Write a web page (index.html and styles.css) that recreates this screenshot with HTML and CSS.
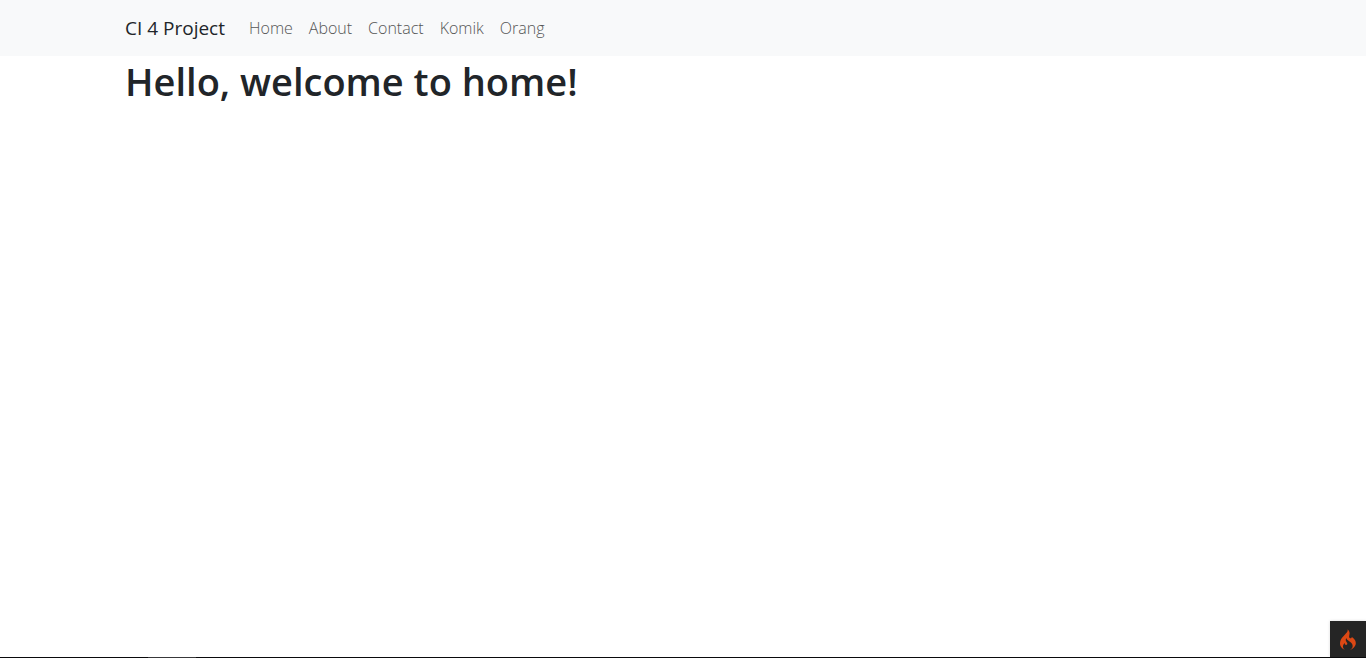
FILE: index.html
```
<!DOCTYPE html>
<html lang="en">
<head>
<meta charset="utf-8">
<meta name="viewport" content="width=device-width, initial-scale=1">
<title>Home</title>
<link rel="stylesheet" href="styles.css">
</head>
<body>
<nav class="navbar">
  <div class="container navbar-inner">
    <a class="brand" href="#">CI 4 Project</a>
    <div class="nav-links">
      <a class="nav-link" href="#">Home</a>
      <a class="nav-link" href="#">About</a>
      <a class="nav-link" href="#">Contact</a>
      <a class="nav-link" href="#">Komik</a>
      <a class="nav-link" href="#">Orang</a>
    </div>
  </div>
</nav>
<main class="container">
  <h1 class="title">Hello, welcome to home!</h1>
</main>
<button class="debug-button" type="button" aria-label="Debug toolbar">
  <svg class="flame" viewBox="0 0 155 200" aria-hidden="true"><path fill="#dd4814" d="M73.7 3.7c2.2 7.9-.7 18.5-7.8 29-1.8 2.6-10.7 12.2-19.7 21.3-23.9 24-33.6 37.1-40.3 54.4-7.9 20.6-7.8 40.8.5 58.2C12.8 180 27.6 193 42.5 198l6 2-3-2.2c-21-15.2-22.9-38.7-4.8-58.8 2.5-2.7 4.8-5 5.1-5 .4 0 .7 2.7.7 6.1 0 5.7.2 6.2 3.7 9.5 3 2.7 4.6 3.4 7.8 3.4 5.6 0 9.9-2.4 11.6-6.5 2.9-6.9 1.6-12-5-20.5-10.5-13.4-11.7-23.3-4.3-34.7l3.1-4.8.7 4.7c1.3 8.2 5.8 12.9 25 25.8 20.9 14.1 30.6 26.1 32.8 40.5 1.1 7.2-.1 16.1-3.1 21.8-2.7 5.3-11.2 14.3-16.5 17.4-2.4 1.4-4.3 2.6-4.3 2.8 0 .2 2.4-.4 5.3-1.4 24.1-8.3 42.7-27.1 48.2-48.6 1.9-7.6 1.9-20.2-.1-28.5-3.5-15.2-14.6-30.5-29.9-41.2l-7-4.9-.6 3.3c-.8 4.8-2.6 7.6-5.9 9.3-4.5 2.3-10.3 1.9-13.8-1-6.7-5.7-7.8-14.6-3.7-30.5 3-11.6 3.2-20.6.5-29.1C88.3 18 80.6 6.3 74.8 2.2 73.1.9 73 1 73.7 3.7z"/></svg>
</button>
<div class="bottom-edge"><div class="bottom-mark"></div></div>
</body>
</html>
```
FILE: styles.css
```
* { box-sizing: border-box; }
body {
  margin: 0;
  background: #fff;
  color: #212529;
  font-family: "Segoe UI", "Open Sans", "Noto Sans", sans-serif;
  font-size: 16px;
  line-height: 24px;
}
.container {
  width: 100%;
  max-width: 1140px;
  margin: 0 auto;
  padding: 0 12px;
}
.navbar { background: #f8f9fa; padding: 8px 0; }
.navbar-inner { display: flex; align-items: center; }
.brand {
  margin-right: 16px;
  color: #212529;
  font-size: 19px;
  font-weight: 400;
  line-height: 30px;
  text-decoration: none;
}
.nav-links { display: flex; }
.nav-link {
  padding: 8px;
  color: #555656;
  font-size: 16px;
  font-weight: 300;
  text-decoration: none;
}
.title {
  margin: 0 0 8px;
  font-size: 38px;
  font-weight: 600;
  line-height: 50px;
}
.debug-button {
  position: fixed;
  right: 0;
  bottom: 1px;
  display: flex;
  align-items: center;
  justify-content: center;
  width: 36px;
  height: 36px;
  padding: 0;
  border: 0;
  background: #252525;
  box-shadow: 0 0 3px #ddd;
}
.flame { width: 16px; height: 21px; }
.bottom-edge {
  position: fixed;
  right: 0;
  bottom: 0;
  left: 0;
  height: 1px;
  padding-left: 148px;
  background: #0a0a0c;
}
.bottom-mark { width: 48px; height: 1px; background: #38383a; }
```
